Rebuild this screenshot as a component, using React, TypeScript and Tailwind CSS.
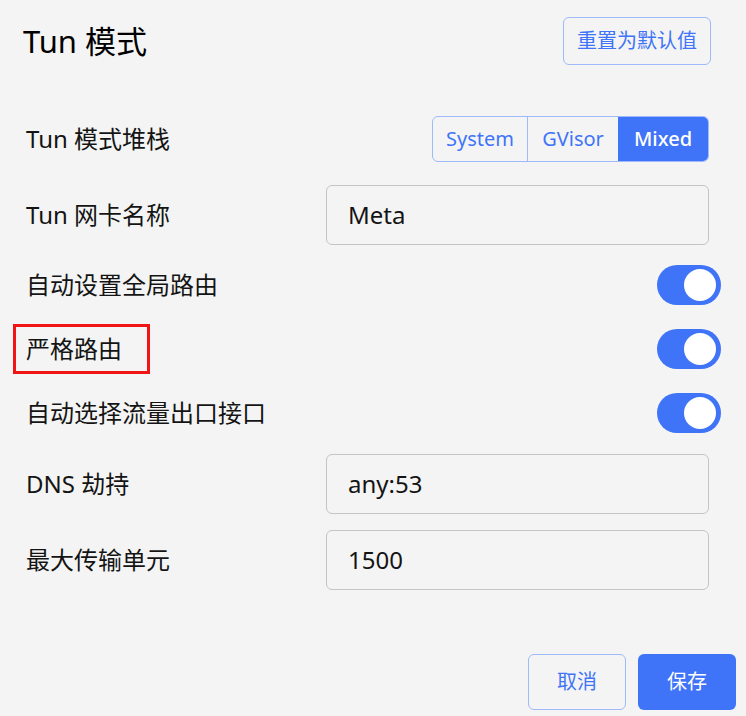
import React from "react";

const font = { fontFamily: '"Noto Sans", "Noto Sans CJK SC", sans-serif' };

function Toggle() {
  return (
    <div className="relative -mr-[12px] h-[40px] w-[64px] rounded-full bg-[#3f74f8]">
      <div className="absolute right-[5px] top-[4px] h-[32px] w-[32px] rounded-full bg-white" />
    </div>
  );
}

function Field({ value }: { value: string }) {
  return (
    <div className="flex h-[60px] w-[383px] items-center rounded-[6px] border border-[#c4c4c4] pl-[21px] text-[24px] text-[#141414]">
      {value}
    </div>
  );
}

export default function App() {
  return (
    <div className="h-[716px] w-[746px] bg-[#f4f4f4] text-[#141414]" style={font}>
      <div className="flex items-center justify-between pl-[23px] pr-[35px] pt-[17px]">
        <div className="text-[31px] leading-none text-black">Tun 模式</div>
        <div className="flex h-[48px] w-[148px] items-center justify-center rounded-[6px] border border-[#9fbafb] text-[20px] text-[#3f74f8]">
          重置为默认值
        </div>
      </div>

      <div className="mt-[51px] pl-[26px] pr-[37px] text-[24px]">
        <div className="flex h-[46px] items-center justify-between">
          <span>Tun 模式堆栈</span>
          <div className="flex h-[46px] overflow-hidden rounded-[6px] border border-[#9fbafb] text-[20px]">
            <div className="flex w-[95px] items-center justify-center border-r border-[#9fbafb] text-[#3f74f8]">System</div>
            <div className="flex w-[90px] items-center justify-center text-[#3f74f8]">GVisor</div>
            <div className="flex w-[90px] items-center justify-center bg-[#3f74f8] font-medium text-white">Mixed</div>
          </div>
        </div>

        <div className="mt-[23px] flex h-[60px] items-center justify-between">
          <span>Tun 网卡名称</span>
          <Field value="Meta" />
        </div>

        <div className="mt-[20px] flex h-[40px] items-center justify-between">
          <span>自动设置全局路由</span>
          <Toggle />
        </div>

        <div className="relative mt-[24px] flex h-[40px] items-center justify-between">
          <span>严格路由</span>
          <div className="absolute -left-[13px] -top-[5px] h-[50px] w-[137px] border-[3px] border-[#f01414]" />
          <Toggle />
        </div>

        <div className="mt-[24px] flex h-[40px] items-center justify-between">
          <span>自动选择流量出口接口</span>
          <Toggle />
        </div>

        <div className="mt-[21px] flex h-[60px] items-center justify-between">
          <span>DNS 劫持</span>
          <Field value="any:53" />
        </div>

        <div className="mt-[16px] flex h-[60px] items-center justify-between">
          <span>最大传输单元</span>
          <Field value="1500" />
        </div>
      </div>

      <div className="mt-[64px] flex justify-end gap-[12px] pr-[10px]">
        <div className="flex h-[56px] w-[98px] items-center justify-center rounded-[6px] border border-[#9fbafb] text-[20px] text-[#3f74f8]">
          取消
        </div>
        <div className="flex h-[56px] w-[98px] items-center justify-center rounded-[6px] bg-[#3f74f8] text-[20px] text-white">
          保存
        </div>
      </div>
    </div>
  );
}
